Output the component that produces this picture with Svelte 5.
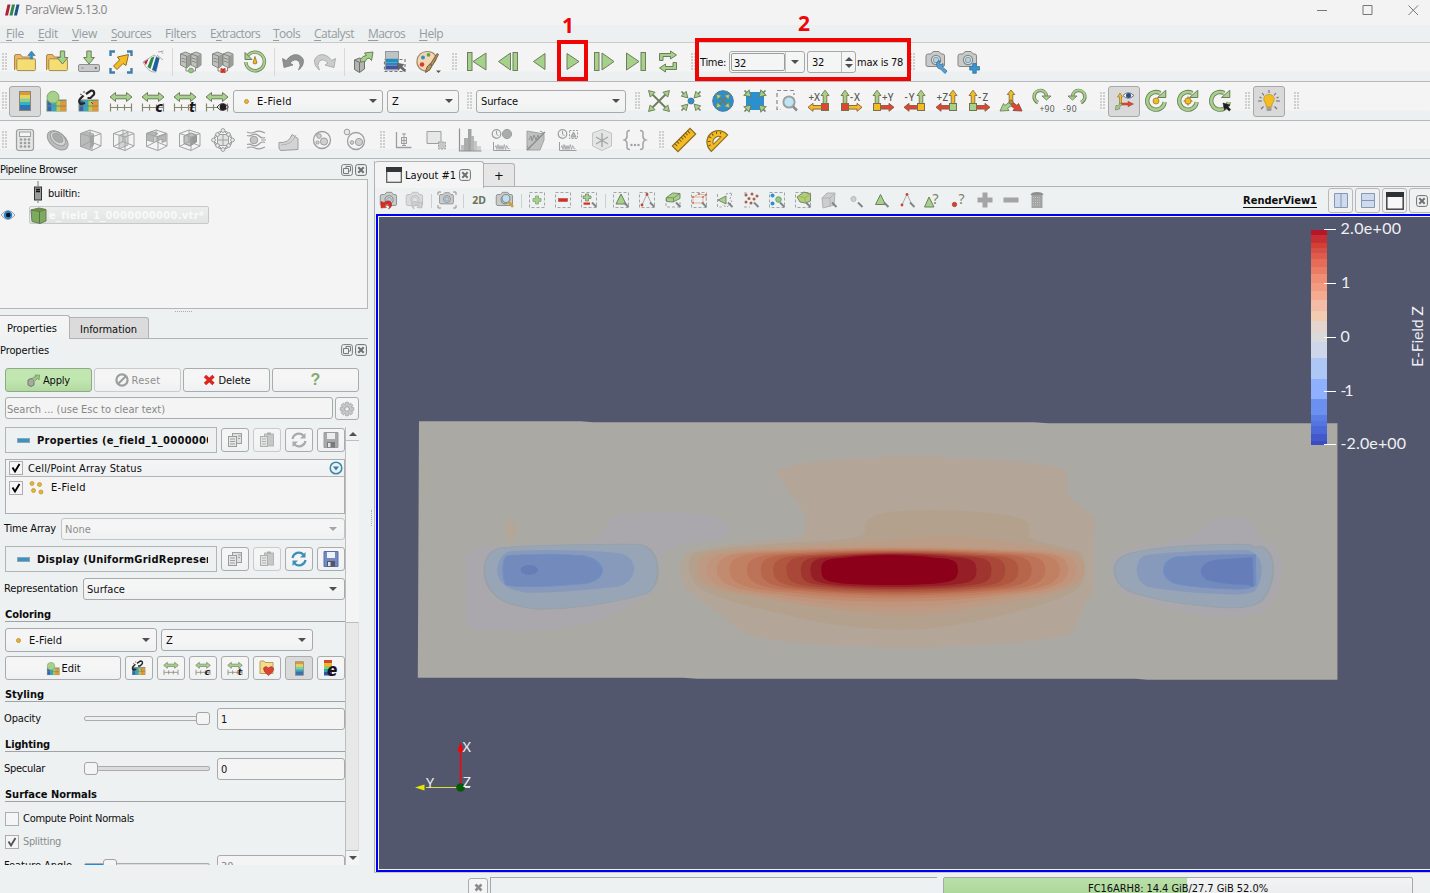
<script>
  // Spreads a label over its nominal width in pixels
  function fit(node, width) {
    if (!width) return;
    const extra = width - node.getBoundingClientRect().width;
    node.style.letterSpacing = `${extra / node.textContent.length}px`;
  }

  const G = '#a5d28b', GS = '#6f7d5e', O = '#f5bb22', R = '#dc4632', B = '#2b90d2', N = '#9c9e9f', L = '#cfd0cf';

  const svg = (body, s = 24) =>
    `<svg width="${s}" height="${s}" viewBox="0 0 ${s} ${s}" fill="none" stroke-width="1" stroke="none">${body}</svg>`;
  const p = (d, fill = 'none', stroke = 'none', w = 1, more = '') =>
    `<path d="${d}" fill="${fill}" stroke="${stroke}" stroke-width="${w}" ${more}/>`;
  const c = (x, y, r, fill = 'none', stroke = 'none', w = 1) =>
    `<circle cx="${x}" cy="${y}" r="${r}" fill="${fill}" stroke="${stroke}" stroke-width="${w}"/>`;
  const r = (x, y, w, h, fill = 'none', stroke = 'none', sw = 1, more = '') =>
    `<rect x="${x}" y="${y}" width="${w}" height="${h}" fill="${fill}" stroke="${stroke}" stroke-width="${sw}" ${more}/>`;
  const t = (x, y, s, size, fill, more = '') =>
    `<text x="${x}" y="${y}" font-family="Noto Sans, sans-serif" font-size="${size}" fill="${fill}" ${more}>${s}</text>`;
  const g = (tr, body) => `<g transform="${tr}">${body}</g>`;

  const folder = p('M1.5 20V6q0-1.5 1.5-1.5h4.5l2 2.5h7.5v3', '#f0b562', '#a58a52') + r(3.8, 8.8, 18.6, 11.8, '#f4dd73', '#a08c50', 1, 'rx="1"');
  const dn = (x, y) => g(`translate(${x} ${y})`, p('M-2.2 0h4.4v6.5h3.2L0 13l-5.4-6.500h3.2z', G, GS));
  const server = (x) => g(`translate(${x} 0)`, p('M0 4l5-2 5 2v11l-4 3-6-3z', '#bfc1bd', '#7d7f7a', 0.900) + p('M6 6l4-2v11l-4 3z', '#9c9e9a') + p('M0 4l6 2v12M1 8l4 1.400M1 11l4 1.400', 'none', '#7f817a', 0.900));
  const servers = server(1.5) + server(12) + p('M7 17v4h9.500v-4', 'none', '#888', 1);
  const range = p('M1 8l5.500-4.500v2.700h11V3.500L23 8l-5.500 4.500V9.800h-11v2.700z', G, GS) + p('M1.500 18.500h21M1.500 14.500v8M8.500 15.500v6M15.500 15.500v6M22.500 14.500v8', 'none', '#85876f', 1.200);
  const ital = (s, x, y, size = 14) => `<text x="${x}" y="${y}" font-family="DejaVu Sans, sans-serif" font-weight="bold" font-style="italic" font-size="${size}" fill="#1b1320">${s}</text>`;
  const lut = r(2, 11, 19, 11, '#3aa6b8', '#7d8a6a') + r(2.500, 12, 4, 10, '#3a62b0') + r(6.500, 12, 5, 10, '#35a8c4') + r(11.500, 12, 4, 10, '#c9c545') + r(15.500, 12, 5.500, 10, '#ea9630') + p('M2 17h19', 'none', '#6f8a78', 1);
  const lutBall = lut + c(8, 8.200, 6, G, '#85a873');
  const lutLink = lut + p('M8 14l-4 1q-3-2-1-5l3.500-3.500M9 5l5-3.500q4 0 3 4l-3.500 3.500-3 0', 'none', '#2a2426', 2.200) + p('M3 5l2 1M7 2v2M14 13l2 2', 'none', '#555', 1);
  const bar = r(6.500, 2.500, 11, 4, '#d89a3a') + r(6.500, 6, 11, 3.500, '#ead35a') + r(6.500, 9.500, 11, 3.500, '#8fcf8a') + r(6.500, 13, 11, 3.500, '#35b1c5') + r(6.500, 16, 11, 5.500, '#3273b4') + r(6.500, 2.500, 11, 19, 'none', '#8b8574', 1);
  const head = (x, y, a, s = 1) => g(`translate(${x} ${y}) rotate(${a}) scale(${s})`, p('M0-4l3.800 6.500h-7.600z', G, GS, 1));
  // Four corner arrow heads at a distance d from the centre
  const four = (d, inward, s) => [45, 135, 225, 315].map((a) => g(`rotate(${a} 12 12)`, head(12, 12 - d, inward ? 180 : 0, s))).join('');
  const up = (x, f) => p(`M${x} 1.200l4 5.300h-2.200v8h-3.600v-8h-2.200z`, f, '#7b7048', 0.900);
  const side = (f, flip) => g(flip ? 'translate(24 0) scale(-1 1)' : '', p('M1 18.300l5-4v2.200h9v3.600H6v2.200z', f, '#8a5a42', 0.900));
  const axis = (label, flip, u, s, q) => up(flip ? 6 : 18, u) + side(s, flip) + r(flip ? 2.500 : 14.500, 14.500, 7, 7, q, '#76704d') + t(flip ? 11 : 1.500, 11.800, label, 9.800, '#555b57', `textLength="${label[0] === '+' ? 11.500 : 10}" font-weight="500"`);
  const ring = (x) => p('M16.300 4.200A8.800 8.800 0 1 0 20.700 13', 'none', GS, 4.300) + p('M16.300 4.200A8.800 8.800 0 1 0 20.700 13', 'none', G, 2.600) + p('M13.500 8.500h8.300V1.200z', G, GS) + x;
  const curl = p('M7 13.500A6.200 6.200 0 1 1 15.500 7', 'none', GS, 3.600) + p('M7.200 13.200A6.200 6.200 0 1 1 15.500 7', 'none', G, 2) + p('M11 7h9l-4.500 4z', G, GS, 0.900);
  const pointer = p('M15 14l7 2-2.300 1.400 3 3.200-1.600 1.500-3-3.200-1.600 2.200z', '#241a22', '#111', 0.500);
  const cubeW = p('M1.500 5.500L11 2l11 3.500L13 9zM1.500 5.500v13L13 22.500V9M22 5.500V18l-9 4.500M11 2v11.500l11 4.500M11 13.500l-9.500 5', 'none', '#a0a2a3', 1);
  const camera = (f = '#c9cbca', s = '#868886', lens = '#a5d6ee') => p('M2 6q0-2 2-2h3l2-2.500h6L17 4h2q1.500 0 1.500 2v9q0 1.500-1.500 1.500H4q-2 0-2-1.500z', f, s) + c(12, 10, 4.600, '#dfe3e4', s, 1.200) + c(12, 10, 2.700, lens, s, 0.800);
  const graph = c(5.500, 6, 4.300, '#eef0f0', N, 1.200) + p('M5.500 3v3l2 2', 'none', N) + p('M2.500 14v8.500h17', 'none', N) + p('M4 19.500l1-2 1 4 1-5 1.200 5 .8-4 1 4 1-4 1 4 1.300-5 1.200 5 1.200-4 1.200 3h1.500', 'none', N, 0.800);
  const swoosh = 'M1.500 8.500l1.500 9 9-2.500-3-2q5-5.500 9-1.500 2.500 3.500-.5 8.500 6-4.500 4.800-10.500Q19.500 3.800 13 4.800 8.500 5.700 5.300 10.500z';

  const ICONS = {
    open: folder + p('M17.300 9V5.500h-2.500L18.500 1l3.700 4.500h-2.500V9z', B, '#5f7d93', 0.800),
    load: folder + dn(17.500, 1),
    save: r(1.500, 14.500, 21, 7, '#c9cacb', '#8d8f90', 1, 'rx="1.500"') + c(18.800, 18, 1.100, '#666') + p('M4 18h3', 'none', '#999') + dn(12, 1),
    catalystout: p('M1.500 6V1.500H6M18 1.500h4.500V6M22.500 18v4.500H18M6 22.500H1.500V18', 'none', '#3f7fae', 2.400) + p('M4.500 16l6-6-2-3 11-2.500L17 15.500l-3-2-6 6z', O, '#8b6f2a'),
    explore: p('M17 2l5.500-1M20 1l2 3M16 5l6 5M2 12l11-7 5 3L15 22q-8 1-13-10z', '#f7f7f7', '#9a9a9a', 0.800) + p('M3 12l4.500-3L5 15z', '#b5243c') + p('M6.500 17L10 8l3.500-1.800L9.500 19z', '#2b8a45') + p('M11 20l4-13 3.500 1L15 21.500z', '#1f5fa0'),
    connect: servers + c(12, 20.500, 2.400, '#8fcb85', '#7c9a72'),
    disconnect: servers + r(9.500, 18.500, 5, 4.500, '#cf5a49') + p('M10 18.500l4 4M14 18.500l-4 4', 'none', '#cf2f20', 1.300),
    history: p('M4.200 6.500A9.300 9.300 0 1 1 2.800 12', 'none', GS, 3.400) + p('M4.200 6.500A9.300 9.300 0 1 1 2.800 12', 'none', G, 2) + p('M2 2.500v7h7z', G, GS) + p('M12 6.500l2 6.500q-2 2-4 0z', O, '#8b6f2a', 0.800),
    undo: p(swoosh, '#8f9191', '#7d7f7f', 0.800),
    redo: g('translate(24 0) scale(-1 1)', p(swoosh, '#cbcccc', '#adafaf', 1)),
    extract: p('M3.500 10l5-2 5 2v9l-5 3.500-5-3z', '#b3b5b1', '#6d6f6a') + p('M3.500 10l5 2.500V22M8.500 12.500l5-2.500', 'none', '#6d6f6a') + p('M9.500 9.500q2-4 6-4L13.500 3l8.500-1-1.500 8.500-2.300-2.500q-3 0-4 3.500l-4.500.5z', G, GS),
    screenbar: r(1.500, 9.500, 20.500, 12, 'none', '#777', 1.200, 'stroke-dasharray="3 2"') + r(2.500, 1.500, 13, 7.500, '#c0c3c4', '#9a9c9d') + r(3, 9, 12, 3.500, '#1f8fbf') + r(3, 12.500, 12, 3, '#2a8ac0') + r(3, 15.500, 12, 4, '#4a4fa0') + r(2.500, 1.500, 13, 18.500, 'none', '#8b9a9c') + p('M14 13l7 1.500-2 1.800 3.500 3.700-1.600 1.500-3.500-3.600L15.500 20z', '#63676a', '#555', 0.500),
    palette: p('M11 1.500c7 0 11 5 8 10-1.500 2-4 1-5 2.500-1 3 2 6-3 7C4 21 .5 16 1 10.500 1.500 5 6 1.500 11 1.500z', '#f5d6b3', '#9b8465', 1.100) + c(12.500, 4.800, 1.900, '#58a552') + c(7, 7.500, 2, B) + c(6, 14.500, 2.300, '#d63f2d') + p('M9.500 22.500q1-7 4.500-8l2 1.500q-1 4-6.500 6.500zM14.500 14l6.500-10.500 1.500 1L16.500 15.500z', '#b8965a', '#665537', 0.900) + p('M20 20.500h5l-2.500 2.500z', '#555'),
    first: r(2.500, 2.500, 4.500, 18, G, GS) + p('M21 3v17L8 11.500z', G, GS),
    prev: r(17, 2.500, 4.500, 18, G, GS) + p('M14.500 3v17L2.500 11.500z', G, GS),
    back: p('M17 3.500v16L5.500 11.500z', G, GS),
    play: p('M7 3.500v16L19 11.500z', G, GS),
    next: r(1.500, 2.500, 4.500, 18, G, GS) + p('M9 3v17l12-8.500z', G, GS),
    last: r(17, 2.500, 4.500, 18, G, GS) + p('M2.500 3v17l12.500-8.500z', G, GS),
    loop: p('M3.500 10.500v-7h11V1l6 4-6 4V6.500H7v4zM20.500 12.500v7h-11V22l-6-4 6-4v2.500H17v-4z', G, GS),
    camwrench: camera() + p('M12.500 13q1-3 4-2l-1.500 2.500 2 1.500 2-1.500q.5 2-.5 3.500l4.500 4-2 2.500-4.500-4.500q-4 0-4-6z', '#5aa0cf', '#38719b', 0.800),
    camplus: camera() + p('M16.700 13.500h3.600v3h3.200v3.600h-3.200v3.200h-3.600v-3.200h-3v-3.600h3z', '#3a93cd', '#2d6d9a', 0.700),
    bar, lutBall, lutLink, range,
    rangec: range + ital('c', 14.500, 22.500), ranget: range + ital('t', 16, 22.500), rangeeye: range + p('M12 18q5.500-7 11.500 0-6 7-11.500 0z', '#eee', '#333', 1) + c(18, 18, 3.300, '#241c24'),
    reset: p('M4 4l16 16M20 4L4 20', 'none', GS, 1.800) + four(11.200, false, 0.900),
    zoomdata: p('M2.500 2.500l5 5M21.500 2.500l-5 5M2.500 21.500l5-5M21.500 21.500l-5-5', 'none', GS, 1.600) + four(8, true, 0.900) + c(12, 12, 3, B, '#4a7896'),
    resetclose: c(12, 12, 10.300, B, '#4a7896') + p('M6.500 6.500l11 11M17.500 6.500l-11 11', 'none', GS, 1.500) + four(6.800, false, 0.800),
    zoomclose: r(3, 3, 18, 18, B, 'none', 0, 'rx="3"') + p('M1.500 1.500l4 4M22.500 1.500l-4 4M1.500 22.500l4-4M22.500 22.500l-4-4', 'none', GS, 1.600) + four(9.500, true, 0.950),
    zoombox: p('M2 8V1.500h17V6M2 11v9.500h4', 'none', '#888', 1.200, 'stroke-dasharray="4 2.500"') + c(14, 13, 5.600, '#bfe4f4', '#9b9fa1', 2) + p('M18 17.500l4 4', 'none', '#8b8f91', 2.600),
    px: axis('+X', false, G, O, R), mx: axis('-X', true, G, O, R), py: axis('+Y', true, G, R, O), my: axis('-Y', false, G, R, O), pz: axis('+Z', false, O, R, G), mz: axis('-Z', true, O, R, G),
    iso: p('M12 1l3.800 4.500h-2v7h-3.600V5.500h-2z', O, '#7b7048', 0.900) + p('M13.500 13l4.500 3.500 1.500-2 3.500 7.500-9-.5 1.500-2-4-3z', R, '#8a4a3a', 0.900) + p('M10.500 13L6 16.500l-1.500-2L1 22l9-.5-1.500-2 4-3z', G, GS, 0.900) + c(12, 13, 2, '#c98d2d', '#76704d'),
    rotp: curl + t(8.500, 22.800, '+90', 8.500, '#555', 'textLength="15"'),
    rotm: g('translate(25 0) scale(-1 1)', curl) + t(0, 22.800, '-90', 8.500, '#555', 'textLength="13.500"'),
    axes: p('M7.500 17V8H5.500L8 4l2.500 4H9.500v6', O, '#8b7b3a', 0.700) + p('M9 14h7v-1.700l5.500 2.700-5.500 2.700V16H9z', R, '#a04030', 0.500) + p('M8.500 14l-2.500 3-2-.5-.5 4.500 4.500-1.500-.5-1.300 2.500-3z', G, GS, 0.700) + p('M11 6.500q5-5.500 11 0-6 5.500-11 0z', '#eef3f7', '#667', 0.900) + c(16.500, 6.500, 2.500, '#2f4c80'),
    center: ring(c(12, 12, 3, O, '#9a7d2e', 0.800)),
    resetcenter: ring(c(12, 12, 3.200, O, '#9a7d2e', 0.800) + p('M12 7.500v2M12 14.500v2M7.500 12h2M14.500 12h2', 'none', '#9a7d2e', 1.200)),
    pickcenter: ring(pointer),
    light: p('M12 1v3M5 4l2 2.300M19 4l-2 2.300M1 12h4M19 12h4M4 20l2.500-2.500M20 20l-2.500-2.500M2.500 8l2 1M21.500 8l-2 1', 'none', '#6d6f70', 1.100) + p('M12 5.500c4 0 6 3 5 6.200-.7 2-2.200 2.500-2.200 6.300H9.200c0-3.800-1.500-4.300-2.200-6.300-1-3.200 1-6.200 5-6.200z', O, '#b8902a', 0.700) + r(9.500, 18, 5, 4, '#9b9d9e', 'none', 0, 'rx="1"'),
    calc: r(3.500, 1.500, 17, 21, '#e4e5e5', N, 1.200, 'rx="2.500"') + r(6.500, 4, 11, 4.500, '#f4f4f4', N) + [11.500, 15, 18.500].map((y) => [8, 12, 16].map((x) => c(x, y, 1.300, N)).join('')).join(''),
    contour: g('rotate(40 12 12)', `<ellipse cx="12" cy="12.500" rx="12" ry="7.500" fill="#bcbdbd" stroke="${N}"/><ellipse cx="11" cy="11" rx="9" ry="5.500" fill="#d4d5d5" stroke="${N}"/><ellipse cx="10.500" cy="10.500" rx="6" ry="3.500" fill="#a9abab" stroke="${N}"/>`),
    clip: p('M1.500 5.500L8 3l7 2.500-4 2.500v13.500l-9.500-3z', '#b9bbbb') + p('M11 8l4-2.500V17l-4 4.500z', '#a3a5a5') + cubeW,
    slice: p('M7 7.500l9-3.500v13l-9 4z', '#d2d3d3', '#a8aaaa') + cubeW,
    threshold: p('M1.500 5.500L7 3.500l6 2-4 2.500v6l-7.500-2zM12 8.500l9-3V13l-4 1.500V11l-5 2z', '#b6b8b8', '#979999', 0.800) + cubeW,
    subset: p('M6 8l7-3 5.500 2v7L12 18l-6-2.500z', '#c0c2c2', '#8f9191') + p('M12 10l6.500-3v7L12 18z', '#989a9a') + cubeW,
    glyph: c(12, 12, 9, 'none', N, 1.200) + r(6.500, 6.500, 11, 11, '#e2e3e3', N) + p('M6.500 12h11M12 6.500v11M2 12l10-10 10 10-10 10z', 'none', N) + [[12, 2.500], [12, 21.500], [2.500, 12], [21.500, 12], [6.500, 6.500], [17.500, 6.500], [6.500, 17.500], [17.500, 17.500]].map(([x, y]) => c(x, y, 1.900, '#e8e9e9', N)).join(''),
    stream: p('M3 4q4 2 8 0t10 1M3 20q4-2 8 0t10-1M3 7.500q3 1 5-.5 4-2 7 1t6 1.500M3 16.500q3-1 5 .5 4 2 7-1t6-1.500M17 12h5', 'none', N, 1.200) + c(10, 12, 3.800, '#c4c5c5', N),
    warp: p('M2 14.500q10 1 13-8l6 4v11l-17.500 1L2 20z', '#d3d4d4', N) + p('M4 17q11 0 15-10', 'none', '#b3b5b5'),
    group: c(12, 12, 8.500, 'none', N, 1.300) + c(14, 13.500, 3.600, L, N) + c(9, 8, 2.300, L, N) + c(7.500, 14.500, 1.600, L, N),
    extractg: c(13, 13, 8.500, 'none', N, 1.300) + c(16, 14, 3.600, L, N) + c(9, 14.500, 1.800, L, N) + c(4, 4, 2.800, '#e7e8e8', N),
    plotline: p('M4.500 4v15.500h15', 'none', N, 1.300) + r(9.500, 9.500, 5, 6, '#eee', N) + p('M12 5.500v12M10 6h4M10 17.500h4M9.500 12.500h5', 'none', N),
    plotsel: p('M2 3.500h14v12H2z', '#e6e7e7', N, 1) + r(13.500, 14, 7, 7, '#c6c8c8', N, 1, 'stroke-dasharray="2 1.300"'),
    hist: r(3, 17, 4, 6, '#bdbfbf') + r(6, 10, 4, 13, '#abadad') + r(10, 1, 3.500, 22, '#a2a4a4') + r(13, 8, 3, 15, '#b5b7b7') + r(16, 13, 3, 10, '#c5c7c7') + r(19, 18, 4, 5, '#d2d4d4') + p('M1.500 .5v22.500h22', 'none', '#8d9294', 1.200),
    pot: graph + c(16, 6, 4.600, '#a9abac', N),
    plotdata: p('M3 3l17 3v6l-4 10H3z', '#bfc1c1', '#a1a3a3') + p('M3 22L21 4', 'none', '#888a8a', 1.300) + p('M5 12l2-4 1 5 2-6 2 5 2-5 1 3', 'none', '#8f9191') + p('M16 3l4 2M3 18l3 4', 'none', '#999'),
    pott: graph + r(12.500, 2.500, 8, 8, 'none', N, 1, 'stroke-dasharray="2 1.300"') + p('M16.500 4l2.500 5h-5z', '#bcbebe', N),
    prog: p('M12 1.500l9.500 3.500v13L12 22.500 2.500 18V5z', '#e3e4e4', '#c3c5c5') + p('M12 5v14M6 9l12 7M18 9L6 16', 'none', '#a4a6a6', 1.400),
    braces: p('M7 2.500Q3.500 2.500 4 6q.5 5-2.500 6Q4.500 13 4 18q-.5 3.500 3 3.500M17 2.500q3.500 0 3 3.500-.5 5 2.500 6-3 1-2.500 6 .5 3.500-3 3.500', 'none', '#a6a8a8', 1.600) + c(8.500, 17, 1.200, N) + c(12, 17, 1.200, N) + c(15.500, 17, 1.200, N),
    ruler: g('rotate(-45 12 12)', r(-.5, 8, 25, 8, O, '#8a6d24', 1.200) + p('M3 8v3.500M6 8v3M9 8v3.500M12 8v3M15 8v3.500M18 8v3M21 8v3.500', 'none', '#6e561b', 1)),
    protractor: g('rotate(-45 12 12)', p('M0 14.500a11.500 11.500 0 0 1 23 0v1.500H0z', O, '#8a6d24', 1.200) + p('M6.500 12.500a5.500 5 0 0 1 10.500 0z', '#f3f3f3', '#8a6d24') + p('M2 10l2 1M4.500 6.500l2 2M8.500 4l1 2.300M13 4l-.5 2.300M17.500 5.500l-1.500 2M20.500 9l-2 1.300', 'none', '#6e561b')),
    refresh: p('M5.500 11a6.500 6.500 0 0 1 11-3.500M18.500 13a6.500 6.500 0 0 1-11 3.500', 'none', '#3d8fb5', 2.200) + p('M18.500 5v5.500H13zM5.500 19v-5.500H11z', '#3d8fb5'),
    refreshoff: p('M5.500 11a6.500 6.500 0 0 1 11-3.500M18.500 13a6.500 6.500 0 0 1-11 3.500', 'none', '#a9abac', 2.200) + p('M18.500 5v5.500H13zM5.500 19v-5.500H11z', '#a9abac'),
    copy: r(9.500, 5.500, 9, 10, '#dfe0e0', '#9c9e9f') + r(5.500, 8.500, 8, 10, '#e5e6e6', '#989a9b') + p('M7 11h5M7 13.500h5M7 16h5M15 8h3M15 10.500h2', 'none', N),
    paste: r(9.500, 6, 9, 12, '#c6c8c8', '#b3b5b5') + r(12, 4.500, 4, 2, '#a9abab') + r(5.500, 8.500, 7, 10, '#e2e3e3', '#adafaf') + p('M7 11h4M7 13.500h4M7 16h4', 'none', '#b2b4b4'),
    disk: p('M5 4.500h14v15H5z', '#7489c2', '#5570ad') + r(8, 5, 8, 6, '#eef1f5') + r(8, 14, 8, 5.500, '#4e5666') + r(9, 15, 2.500, 4, '#dfe3e8'),
    diskoff: p('M5 4.500h14v15H5z', '#a6a8a9', '#9b9d9e') + r(8, 5, 8, 6, '#eceded') + r(8, 14, 8, 5.500, '#77797a') + r(9, 15, 2.500, 4, '#e3e4e4'),
    gear: g('translate(12 12)', [0, 45, 90, 135].map((a) => g(`rotate(${a})`, r(-1.700, -6.800, 3.400, 13.600, '#c5c7c8', '#9b9d9e', 0.700, 'rx=".8"'))).join('') + c(0, 0, 4.700, '#c5c7c8') + c(0, 0, 2.300, '#edf0f1', '#9b9d9e', 0.900)),
    heart: p('M5 6q0-1 1-1h3l1 1.500h8v11H5z', '#f3dc8a', '#b59f5e') + p('M13.500 19.500Q8 15.500 8.500 12q2-3 5 0 3-3 5 0 1 3-5 7.500z', '#db4336', '#a6332a', 0.600),
    expr: p('M5 4h8v3H5z', '#d6462e') + r(5, 7, 8, 3, '#f0b431') + r(5, 10, 8, 3, '#8fcf5a') + r(5, 13, 8, 3, '#2ba3c5') + r(5, 16, 8, 3.500, '#2d55a8') + ital('e', 8, 20, 17),
    cube: p('M1 3l8-2 7 1.500V14l-6 2.500-8-2z', '#7dab5e', '#6b7a58') + p('M1 3l8.500 1.500V16M9.500 4.500L16 2.500', 'none', '#5c7148') + p('M1 3l8.500 1.500L16 2.500 9 1z', '#6f8c48'),
  };

  const dash = r(2.500, 2.500, 15, 15, 'none', '#a3a5a5', 1, 'stroke-dasharray="3 2"');
  const wand = p('M13 12.500l4.500 4.500', 'none', '#80858a', 2);
  const sm = (f, s, lens) => g('translate(-.5 1) scale(.88)', camera(f, s, lens));
  const tri = p('M10 4l5 10H5z', G, GS, 1);
  const dots3 = p('M10 4L5 15M10 4l5 11', 'none', '#a5a5a5', 0.900) + c(10, 4.500, 1.400, '#bf4a3c') + c(5, 15, 1.400, '#cf4034');
  const q = t(9.500, 13.500, '?', 14, '#77836a');
  const SMALL = {
    undo: sm() + p('M2 11.500v6.500l5.500-.5-2-1.800q3-3 4.500-.3 1 1.800-.5 3.600 4-2 3-6-2-4-7.500-.5z', '#e02a20', '#a52a20', 0.500),
    redo: sm('#d9dadb', '#bbbdbd', '#e3e6e8') + p('M17 12v6l-5-.5 1.800-1.800q-3-2.500-4.800.3-.8 1.800 0 3-3-2-2-5.500 2-3.500 7-.5z', '#cfd0d0', '#adafaf', 0.600),
    shot: g('translate(1 1.500) scale(.75)', camera()) + p('M1 5V2h3M16 2h3v3M19 15v3h-3M4 18H1v-3', 'none', '#8f9192', 1),
    zoom: sm() + c(11, 8.500, 4, '#b9dff0', '#8b8f91', 1.200) + p('M13.500 11.500l4.500 5.500', 'none', '#c9a23a', 2.600),
    addsel: dash + p('M8.500 6h3v2.500H14v3h-2.500V14h-3v-2.500H6v-3h2.500z', G, '#89a577', 0.800),
    subsel: dash + r(5.500, 8.500, 9, 3, '#e02a20', '#a34b42', 0.600),
    togsel: dash + p('M6.500 4h3v2H12v2.500H9.500V11h-3V8.500H4V6h2.500z', G, GS, 0.700) + r(4.500, 12.500, 6.500, 2.200, '#e02a20') + wand,
    selcell: dash + tri + wand, selpt: dash + dots3 + wand,
    frcell: p('M3 8v9h14v-5', 'none', '#a3a5a5', 1, 'stroke-dasharray="3 2"') + p('M3.500 7.500l6-4.500 7.500.5v5l-7 3.500-6.500-.5z', G, GS, 0.900) + p('M3.500 7.500l7 .5v4M10.500 8L17 3.500', 'none', GS, 0.800) + wand,
    frpt: dash + p('M4 7l6-3 7 1v6M4 7h10v6H4zM14 7l3-2', 'none', '#d8b5a0', 1) + [[4, 7], [10, 4], [17, 5], [14, 7], [4, 13], [14, 13]].map(([x, y]) => c(x, y, 1, '#d86a50')).join('') + wand,
    pcell: p('M2.500 4v13h4', 'none', '#a3a5a5', 1, 'stroke-dasharray="3 2"') + p('M3 10l8-4v8z', G, GS, 0.900) + p('M11 4l6-1-2 6 2 3-5 5-5-2', 'none', '#999', 1, 'stroke-dasharray="2 1.500"') + wand,
    ppt: p('M3 3h4M3 17h6', 'none', '#a3a5a5', 1, 'stroke-dasharray="3 2"') + [[5, 5], [11, 4], [8, 8.500], [13, 9], [5, 12], [10, 13], [16, 6]].map(([x, y]) => c(x, y, 1.500, '#a5644e')).join('') + wand,
    block: dash + c(5.500, 5.500, 2, B) + c(5.500, 13.500, 2, B) + c(11.500, 9.500, 2.800, '#8fcb85', '#70a066') + wand,
    frblock: dash + p('M4 7l7-5 6.500 2v7l-5 2-5.500-1z', G, GS, 0.900) + p('M5 6l7 2v4M12 8l5-4', 'none', '#c8b03c', 1.500) + wand,
    inter: p('M3 8l5-5h8l-1 12-11 3z', '#cccdcd', '#b0b2b2') + p('M3 8h8l5-5M11 8v9', 'none', '#b0b2b2') + wand,
    hoverp: c(8.500, 9, 2.600, '#cdcfcf', '#b9bbbb') + wand,
    hcell: p('M9.500 4.500l5 10h-10z', G, GS) + wand, hpt: dots3 + wand,
    qcell: p('M6 7l5 10H1.500z', G, GS) + q, qpt: c(5.500, 14.500, 2.200, '#d8402f', '#9d3a2e', 0.700) + q,
    plus: p('M7.500 2.500h5v5h5v5h-5v5h-5v-5h-5v-5h5z', '#a3a4a4'),
    minus: r(2.500, 7.500, 15, 5, '#a3a4a4'),
    trash: p('M4.500 5h11v13h-11z', '#a2a4a4') + p('M3.500 5Q4 2 10 2t6.500 3z', '#8e9090') + p('M6 7.500h8M6 10h8M6 12.500h8M6 15h8', 'none', '#c3c5c5', 1, 'stroke-dasharray="1 1"'),
  };

  // [kind or icon name, slot width, pressed flag or left padding of a grip]
  const row1a = [['grip', 9], ['open', 32], ['load', 32], ['save', 32], ['catalystout', 32], ['explore', 32], ['sep', 6], ['connect', 32], ['disconnect', 32], ['history', 32], ['sep', 6], ['undo', 32], ['redo', 32], ['sep', 6], ['extract', 31], ['screenbar', 33], ['palette', 34], ['grip', 16, 2], ['first', 31], ['prev', 32], ['back', 31], ['play', 34], ['next', 31], ['last', 32], ['loop', 32], ['grip', 16, 2]];
  const row1b = [['grip', 15], ['camwrench', 32], ['camplus', 32]];
  const row2a = [['grip', 9], ['bar', 32, true], ['lutBall', 32], ['lutLink', 32], ['range', 32], ['rangec', 32], ['ranget', 32], ['rangeeye', 32]];
  const row2b = [['grip', 17, 5], ['reset', 32], ['zoomdata', 32], ['resetclose', 32], ['zoomclose', 32], ['zoombox', 32], ['px', 32], ['mx', 32], ['py', 32], ['my', 32], ['pz', 32], ['mz', 32], ['iso', 32], ['rotp', 32], ['rotm', 32], ['grip', 17, 5], ['axes', 32, true], ['center', 32], ['resetcenter', 32], ['pickcenter', 32], ['grip', 17, 5], ['light', 32, true], ['grip', 22]];
  const row3 = [['grip', 8], ...['calc', 'contour', 'clip', 'slice', 'threshold', 'subset', 'glyph', 'stream', 'warp', 'group', 'extractg'].map((n) => [n, 33]), ['grip', 16, 6], ...['plotline', 'plotsel', 'hist', 'pot', 'plotdata', 'pott', 'prog', 'braces'].map((n) => [n, 33]), ['grip', 16, 5], ['ruler', 33], ['protractor', 33]];
  const viewBar = ['undo', 'redo', '|', 'shot', '|', '2D', 'zoom', '|', 'addsel', 'subsel', 'togsel', '|', 'selcell', 'selpt', 'frcell', 'frpt', 'pcell', 'ppt', 'block', 'frblock', 'inter', 'hoverp', 'hcell', 'hpt', 'qcell', 'qpt', 'plus', 'minus', 'trash'];

  const menus = [['', 'F', 'ile', 18, 14], ['', 'E', 'dit', 20, 14], ['', 'V', 'iew', 25, 14], ['', 'S', 'ources', 40, 14], ['F', 'i', 'lters', 31, 14], ['E', 'x', 'tractors', 50, 13], ['', 'T', 'ools', 27, 14], ['', 'C', 'atalyst', 40, 14], ['', 'M', 'acros', 37, 14], ['', 'H', 'elp', 24, 0]];

  const legend = [[60, '#b81628'], [75, '#c62f32'], [99, '#d43f33'], [114, '#d44f45'], [129, '#e05b4b'], [147, '#e56c57'], [171, '#ea7b64'], [192, '#f08e74'], [219, '#f39b80'], [243, '#f5ab90'], [270, '#f4bba6'], [303, '#f2ccb0'], [333, '#e6d4cf'], [366, '#d9dad9'], [396, '#cdd6ea'], [444, '#adc8f5'], [507, '#8fb0fe'], [567, '#6c90f0'], [615, '#5b7ee6'], [633, '#5475de'], [648, '#4a68d6'], [672, '#4159cb'], [693, '#3a4cc0'], [705, '']];
  const ticks = [[229.500, '2.0e+00', 1340.500, 60.500], [283.500, '1', 1341, 8], [337.500, '0', 1340.500, 9.500], [391.500, '-1', 1340.500, 13], [444.500, '-2.0e+00', 1340.500, 65.500]];

  const bands = [
    [480, 1125, 408, 605, '#bd9a84'], [495, 1112, 412, 590, '#c0957b'], [512, 1098, 415, 575, '#c28b6f'], [533, 1084, 418, 565, '#c28063'],
    [562, 1060, 421, 557, '#bd7357'], [585, 1037, 423, 551, '#b8664b'], [606, 1015, 426, 546, '#b05740'], [628, 993, 428, 541, '#a94838'],
    [652, 970, 430, 536, '#a03530'], [668, 945, 432, 531, '#961f27'], [686, 914, 435, 525, '#8c001a'],
  ];
  const band = ([l, rt, tp, b]) => {
    const w = rt - l, m = (l + rt) / 2, h = b - 480;
    const f = 0.08 + (0.26 * (b - 524)) / 80;
    const ty = tp + 8, y1 = 480 - 0.7 * (480 - tp), by = b - h * f, y2 = 480 + Math.min(42, 0.75 * h), by2 = by - 4 - h * 0.06;
    return `M${l} 480C${l} ${y1} ${l + w * 0.04} ${ty + 4} ${l + w * 0.17} ${ty}Q${m - w * 0.18} ${tp} ${m} ${tp}Q${m + w * 0.18} ${tp} ${rt - w * 0.17} ${ty}C${rt - w * 0.04} ${ty + 4} ${rt} ${y1} ${rt} 480C${rt} ${y2} ${rt - w * 0.05} ${by2} ${rt - w * 0.17} ${by}Q${m + w * 0.18} ${b} ${m} ${b}Q${m - w * 0.18} ${b} ${l + w * 0.17} ${by}C${l + w * 0.05} ${by2} ${l} ${y2} ${l} 480Z`;
  };
</script>

{#snippet txt(s, w)}<span class="txt" use:fit={w}>{s}</span>{/snippet}
{#snippet ico(name)}<span class="ic">{@html svg(ICONS[name])}</span>{/snippet}
{#snippet cells(list)}
  {#each list as [name, width, extra]}
    <span class="cell" class:on={extra === true} style:width="{width}px" style:padding-left="{extra > 1 ? extra : 0}px">
      {#if name === 'grip'}<i class="grip"></i>{:else if name === 'sep'}<i class="sep"></i>{:else}{@render ico(name)}{/if}
    </span>
  {/each}
{/snippet}
{#snippet dockButtons()}
  <span class="dock">
    <svg width="12" height="12" viewBox="0 0 12 12" fill="none" stroke="#777b7c"><rect x=".6" y=".6" width="10.800" height="10.800" rx="2" /><path d="M5 4.500V2.500h4.500V7H7.500M2.500 4.500h5v5h-5z" /></svg>
    {@render closeBox()}
  </span>
{/snippet}
{#snippet closeBox()}
  <svg width="12" height="12" viewBox="0 0 12 12" fill="none" stroke="#6c7071"><rect x=".6" y=".6" width="10.800" height="10.800" rx="2" /><path d="M3.300 3.300l5.400 5.400M8.700 3.300L3.300 8.700" stroke-width="2" /></svg>
{/snippet}
{#snippet combo(label, w, cls, dot)}
  <div class="combo {cls}">
    {#if dot}<i class="dot"></i>{/if}{@render txt(label, w)}<i class="caret"></i>
  </div>
{/snippet}
{#snippet check(on)}
  <span class="check">{#if on}<svg width="12" height="12" viewBox="0 0 12 12"><path d="M2.500 5.500L5 9.500 9.500 2" fill="none" stroke="currentColor" stroke-width="1.900" /></svg>{/if}</span>
{/snippet}
{#snippet header(title, w, refresh, disk)}
  <div class="hdr">
    <div class="hbox"><i class="dashmark"></i><b>{@render txt(title, w)}</b></div>
    <span class="btn sq">{@render ico('copy')}</span><span class="btn sq off">{@render ico('paste')}</span>
    <span class="btn sq">{@render ico(refresh)}</span><span class="btn sq">{@render ico(disk)}</span>
  </div>
{/snippet}

<div class="app">
  <div class="title">
    <svg width="15" height="12" viewBox="0 0 15 12"><path d="M2.500.5h3L3 11.500H0z" fill="#b3203a" /><path d="M7 .5h3L7.500 11.500h-3z" fill="#2a8a4a" /><path d="M11.500.5h3L12 11.500H9z" fill="#1d5288" /></svg>
    {@render txt('ParaView 5.13.0', 82)}
    <svg class="wc" width="102" height="12" viewBox="0 0 102 12" fill="none" stroke="#777"><path d="M0 6.500h10M46 1.500h9v9h-9zM91.500 1.500l9.500 9.500M101 1.500L91.500 11" /></svg>
  </div>
  <div class="menu">
    {#each menus as [a, u, b, w, gap]}<span class="txt" use:fit={w} style:margin-right="{gap}px">{a}<u>{u}</u>{b}</span>{/each}
  </div>

  <div class="bar">
    {@render cells(row1a)}
    <span class="tlabel">{@render txt('Time:', 26)}</span>
    <div class="tcombo"><div class="tin">{@render txt('32', 12)}</div><span class="tdrop"><i class="caret"></i></span></div>
    <div class="spin"><span class="sv">{@render txt('32', 12)}</span><span class="sb"><i class="caret up"></i><i class="caret"></i></span></div>
    <span class="tmax">{@render txt('max is 78', 46)}</span>
    {@render cells(row1b)}
  </div>
  <div class="bar">
    {@render cells(row2a)}
    {@render combo('E-Field', 35, 'c150', true)}
    {@render combo('Z', 6, 'c72')}
    <span class="cell g2"><i class="grip"></i></span>
    {@render combo('Surface', 37, 'c150 nomr')}
    {@render cells(row2b)}
  </div>
  <div class="bar last">{@render cells(row3)}</div>

  <div class="main">
    <aside>
      <div class="dtitle">{@render txt('Pipeline Browser', 77)}{@render dockButtons()}</div>
      <div class="tree">
        <div class="trow first">
          <svg width="10" height="22" viewBox="0 0 10 22"><path d="M5 0v5M5 20v2" stroke="#7a7d68" /><rect x="1.500" y="6" width="7" height="13" fill="#9a9c9b" stroke="#333" /><path d="M3 8.500h4M3 10.500h4" stroke="#111" stroke-width="1.400" /></svg>
          {@render txt('builtin:', 32)}
        </div>
        <div class="trow second">
          <svg width="16" height="12" viewBox="0 0 16 12"><path d="M1 6q7-9 14 0-7 9-14 0z" fill="#f3f5f6" stroke="#9ba3a8" /><circle cx="8" cy="6" r="4.300" fill="#2c86c6" /><circle cx="8.300" cy="6" r="2.300" fill="#0a1016" /></svg>
          <div class="sel"><span class="ic cube">{@html svg(ICONS.cube, 17)}</span><b>{@render txt('e_field_1_0000000000.vtr*', 155)}</b></div>
        </div>
      </div>
      <div class="hdots"></div>
      <div class="tabs"><div class="tab act">{@render txt('Properties', 50)}</div><div class="tab">{@render txt('Information', 57)}</div><div class="fill"></div></div>
      <div class="dtitle two">{@render txt('Properties', 49)}{@render dockButtons()}</div>
      <div class="btns">
        <span class="btn apply"><svg width="13" height="13" viewBox="0 0 13 13"><path d="M1 6l3-1.500L7 6v5l-3 1.500L1 11z" fill="#a6aaa3" stroke="#74786f" /><path d="M5 5q1-2.500 4-2.500L8 1h4.500l-.5 5-1.500-1.500L8 7" fill="#9bc587" stroke="#7c9270" stroke-width=".8" /></svg>{@render txt('Apply', 27)}</span>
        <span class="btn off"><svg width="14" height="14" viewBox="0 0 14 14" fill="none" stroke="#9b9d9e" stroke-width="2.200"><circle cx="7" cy="7" r="5.600" /><path d="M3 11L11 3" /></svg>{@render txt('Reset', 29)}</span>
        <span class="btn"><svg width="13" height="12" viewBox="0 0 13 12"><path d="M2 2l8.500 8M10.500 2L2 10" stroke="#d9261e" stroke-width="3.400" /></svg>{@render txt('Delete', 32)}</span>
        <span class="btn help">?</span>
      </div>
      <div class="search"><div class="inp">{@render txt('Search ... (use Esc to clear text)', 158)}</div><span class="btn gear">{@render ico('gear')}</span></div>

      <div class="scroll">
        <div class="content">
          {@render header('Properties (e_field_1_00000000)', 188, 'refreshoff', 'diskoff')}
          <div class="arr">
            <div class="arow head">{@render check(true)}{@render txt('Cell/Point Array Status', 114)}
              <svg width="14" height="14" viewBox="0 0 14 14"><circle cx="7" cy="7" r="5.800" fill="#e9f1f4" stroke="#3f87a6" stroke-width="1.500" /><path d="M4 5.500h6L7 9.500z" fill="#3a7f9f" /></svg>
            </div>
            <div class="arow">{@render check(true)}<svg class="pts" width="16" height="16" viewBox="0 0 16 16" fill="#ecb428" stroke="#b58f35" stroke-width=".7"><circle cx="3" cy="3.500" r="2" /><circle cx="10.500" cy="4.500" r="2" /><circle cx="4.500" cy="10.500" r="2" /><circle cx="12" cy="12" r="2" /></svg>{@render txt('E-Field', 35)}</div>
          </div>
          <div class="frow mb6"><span class="lab l1">{@render txt('Time Array', 52)}</span>{@render combo('None', 26, 'grow dis')}</div>
          {@render header('Display (UniformGridRepresentation)', 216, 'refresh', 'disk')}
          <div class="frow"><span class="lab l2">{@render txt('Representation', 74)}</span>{@render combo('Surface', 38, 'grow')}</div>
          <div class="sect">{@render txt('Coloring', 46)}</div>
          <div class="frow cc">{@render combo('E-Field', 33, 'cc1', true)}{@render combo('Z', 6, 'cc2')}</div>
          <div class="frow eb">
            <span class="btn edit"><span class="ic mini">{@html svg(ICONS.lutBall).replace('width="24" height="24"', 'width="15" height="15"')}</span>{@render txt('Edit', 19)}</span>
            {#each ['lutLink', 'range', 'rangec', 'ranget'] as n}<span class="btn sq"><span class="ic">{@html svg(ICONS[n]).replace('width="24" height="24"', 'width="16" height="16"')}</span></span>{/each}
            <span class="btn sq">{@render ico('heart')}</span>
            <span class="btn sq down"><span class="ic">{@html svg(bar).replace('width="24" height="24"', 'width="17" height="17"')}</span></span>
            <span class="btn sq">{@render ico('expr')}</span>
          </div>
          <div class="sect">{@render txt('Styling', 39)}</div>
          <div class="frow"><span class="lab l3">{@render txt('Opacity', 37)}</span><span class="slider"><i class="right"></i></span><div class="inp v">1</div></div>
          <div class="sect">{@render txt('Lighting', 45)}</div>
          <div class="frow"><span class="lab l3">{@render txt('Specular', 41)}</span><span class="slider gray"><i></i></span><div class="inp v">0</div></div>
          <div class="sect">{@render txt('Surface Normals', 92)}</div>
          <div class="crow">{@render check(false)}{@render txt('Compute Point Normals', 111)}</div>
          <div class="crow dim">{@render check(true)}{@render txt('Splitting', 38)}</div>
          <div class="frow"><span class="lab l3">{@render txt('Feature Angle', 68)}</span><span class="slider part"><i></i></span><div class="inp v dimt">30</div></div>
        </div>
        <div class="sbar"><span class="sbtn"><i class="caret up"></i></span><span class="track"></span><span class="thumb"></span><span class="sbtn dn"><i class="caret"></i></span></div>
      </div>
    </aside>
    <div class="split"><i></i></div>
    <section>
      <div class="ltabs">
        <div class="ltab a"><svg width="16" height="16" viewBox="0 0 16 16"><rect x=".7" y="1" width="14.600" height="14.300" fill="#f3f3f3" stroke="#555" stroke-width="1.200" /><path d="M0 0h16v5H0z" fill="#333638" /></svg>{@render txt('Layout #1', 51)}{@render closeBox()}</div>
        <div class="ltab b">+</div><div class="lfill"></div>
      </div>
      <div class="vbar">
        {#each viewBar as n}
          {#if n === '|'}<span class="vsep"></span>{:else if n === '2D'}<span class="vcell d2">2D</span>{:else}<span class="vcell ic">{@html svg(SMALL[n], 20)}</span>{/if}
        {/each}
        <b class="rv">{@render txt('RenderView1', 74)}</b>
        <span class="vb"><svg width="14" height="15" viewBox="0 0 14 15"><path d="M.5.5h13v14H.5zM7 0v15" fill="#cfdaee" stroke="#8497b3" /></svg></span>
        <span class="vb"><svg width="14" height="15" viewBox="0 0 14 15"><path d="M.5.5h13v14H.5zM0 7.500h14" fill="#cfdaee" stroke="#8497b3" /></svg></span>
        <span class="vb"><svg width="18" height="18" viewBox="0 0 18 18"><rect x=".8" y=".8" width="16.400" height="16.400" fill="#f8f8f8" stroke="#47434e" stroke-width="1.500" /><path d="M0 0h18v5H0z" fill="#2f3234" /></svg></span>
        <span class="vb">{@render closeBox()}</span>
      </div>
      <div class="view">
        <svg width="1051" height="652" viewBox="379 217 1051 652">
          <rect x="379" y="217" width="1051" height="652" fill="#52576e" />
          <g transform="translate(410 410) scale(.5995 .33333)">
            <path fill="#aaa9a4" d="M15 34H285L305 37H1040L1065 40H1547V809H1230L1210 806H480L455 803H13Z" />
            <path fill="#aba8ad" d="M93 440Q95 415 130 408L290 398Q318 385 325 350Q335 312 370 308Q430 303 480 312Q530 325 535 355Q535 380 515 390Q440 405 425 420Q415 440 418 470L410 540Q390 575 330 620Q270 660 200 662L110 660Q95 660 93 640Z" />
            <path fill="#aba8ad" d="M1170 440Q1180 420 1240 405Q1310 385 1322 350Q1325 325 1375 323Q1405 325 1410 350Q1415 385 1440 405Q1458 430 1455 500Q1450 560 1425 605Q1380 630 1320 618Q1220 580 1185 545Q1165 510 1170 440Z" />
            <path fill="#b3a698" d="M612 185Q615 172 650 162Q720 143 800 140Q900 138 980 150Q1060 160 1090 178Q1097 190 1096 215Q1092 240 1100 260Q1120 295 1143 320L1141 540Q1130 570 1118 610Q1112 650 1100 672Q1040 700 900 710Q820 715 720 708Q600 695 565 675Q545 660 530 630L500 590Q460 540 455 520Q445 470 460 430Q480 415 540 403L640 385Q662 375 660 355V320Q655 295 640 265L620 215Q610 200 612 185ZM163 322Q182 345 181 358Q178 378 163 402Q155 360 163 322Z" />
            <path fill="#b4a18d" d="M760 340Q765 315 800 305Q870 295 950 305Q1025 318 1032 340V380Q1045 392 1075 405L1118 425Q1135 480 1118 530Q1100 560 1040 590Q920 655 820 660Q720 655 640 620Q510 570 480 530Q455 480 470 430Q530 405 700 392Q755 385 758 370Z" />
            <path fill="#bb9d87" d="M800 392Q890 370 970 390Q1080 410 1112 430Q1126 480 1112 525Q1050 570 960 590Q820 640 700 595Q560 560 490 525Q470 480 485 435Q560 410 720 400Z" />
            {#each bands as b}<path d={band(b)} fill={b[4]} />{/each}
            <path fill="#98a5b6" stroke="#97a2a5" stroke-width="3" d="M124 480Q125 425 150 414Q230 402 380 403Q412 410 413 480Q414 530 395 550Q310 595 215 598Q165 590 145 560Q124 530 124 480Z" />
            <path fill="#879abc" d="M145 480Q148 430 170 423Q270 415 350 430Q374 440 374 480Q370 520 345 530Q260 548 195 548Q165 540 158 525Q146 510 145 480Z" />
            <path fill="#738abd" stroke="#6f90c6" stroke-width="2" d="M155 475Q156 437 165 436L235 432L290 437Q320 450 321 485Q318 510 295 520Q230 532 180 530L160 525Q155 510 155 475Z" />
            <ellipse cx="199" cy="480" rx="14.500" ry="15" fill="#667eb8" />
            <path fill="#98a5b6" stroke="#97a2a5" stroke-width="3" d="M1175 480Q1175 440 1205 428Q1270 403 1385 403L1402 405L1408 412L1418 408Q1440 420 1440 480Q1438 540 1420 575Q1400 597 1360 593Q1270 585 1200 545Q1175 520 1175 480Z" />
            <path fill="#879abc" d="M1212 480Q1213 440 1230 435Q1300 420 1395 420Q1420 430 1421 480Q1420 520 1408 545Q1390 557 1350 552Q1270 545 1230 530Q1212 515 1212 480Z" />
            <path fill="#738abd" stroke="#6f90c6" stroke-width="2" d="M1257 482Q1258 448 1280 440Q1340 433 1410 434L1411 525Q1400 540 1370 537Q1300 532 1275 520Q1257 505 1257 482Z" />
            <path fill="#657db8" d="M1319 485Q1320 455 1345 449L1405 442L1407 530L1395 524Q1350 522 1330 510Q1320 500 1319 485Z" />
          </g>
          {#each legend.slice(0, -1) as [y, color], i}<rect x="1311" y={210 + y / 3} width="16" height={(legend[i + 1][0] - y) / 3 + 0.1} fill={color} shape-rendering="crispEdges" />{/each}
          {#each ticks as [y, label, x, w]}
            <path d="M1324 {y}h12" stroke="#fff" />
            <text {x} y={y + 4.500} textLength={w} class="vt">{label}</text>
          {/each}
          <text class="vt" textLength="61" transform="translate(1422.500 367) rotate(-90)">E-Field Z</text>
          <path d="M460.500 787V750" stroke="#f00" stroke-width="1.500" /><path d="M460.500 742l3 9.500h-6z" fill="#f00" />
          <path d="M460 787.500h-34" stroke="#dbe03a" /><path d="M460 787.500h10" stroke="#ddd" /><path d="M415 787.500l9.500-3v6z" fill="#e6e600" />
          <circle cx="460.500" cy="787.500" r="4.300" fill="#065a06" />
          <text class="ax" x="462.500" y="752">X</text><text class="ax" x="426" y="788">Y</text><text class="ax" x="463" y="787">Z</text>
        </svg>
      </div>
    </section>
  </div>
  <div class="status">
    <span class="btn sx"><svg width="9" height="9" viewBox="0 0 9 9"><path d="M1.500 1.500l6 6M7.500 1.500l-6 6" stroke="#8b8d8c" stroke-width="2.600" /></svg></span>
    <div class="sbox"></div>
    <div class="mem"><div class="used" style:width="52%"></div><span>{@render txt('FC16ARH8: 14.4 GiB/27.7 GiB 52.0%', 180)}</span></div>
  </div>

  <div class="mark m1"></div><div class="mark m2"></div>
  <span class="num n1">1</span><span class="num n2">2</span>
</div>

<style>
  :global(body) { background: #eef1f2; overflow: hidden; }
  .app { position: relative; width: 1430px; height: 893px; overflow: hidden; background: #eef1f2; font: 11px/14px "DejaVu Sans Condensed", "DejaVu Sans", sans-serif; font-stretch: condensed; color: #0c0c0c; display: flex; flex-direction: column; }
  .app, .app :global(*) { box-sizing: border-box; }
  .txt { display: inline-block; white-space: nowrap; flex: none; }
  .ic, .ic :global(svg), svg { display: block; flex: none; overflow: visible; }
  .title { height: 25px; background: #f3f3f3; display: flex; align-items: center; padding: 0 11px 6px 5px; font: 12px/16px "Open Sans", sans-serif; color: #858585; gap: 5px; flex: none; }
  .wc { margin-left: auto; }
  .menu { height: 18px; background: #ecf0f1; border-bottom: 1px solid #c8cbcb; display: flex; align-items: center; padding: 1px 0 0 6px; font: 12px/16px "Open Sans", sans-serif; color: #969b9e; flex: none; }
  .menu u { text-underline-offset: 2px; }
  .bar { height: 39px; border-bottom: 1px solid #b5b8b8; background: linear-gradient(#f4f4f4 74%, #ecf0f1 76%); display: flex; align-items: center; flex: none; }
  .bar.last { height: 38px; }
  .cell { display: flex; align-items: center; justify-content: center; height: 32px; flex: none; }
  .cell.on { background: #dad9d9; border: 1px solid #aaa7a8; border-radius: 3px; height: 31px; }
  .grip { width: 5px; height: 18px; flex: none; background: radial-gradient(circle at 1px 1px, #c0c3c3 .6px, transparent 1px) 0 0/3px 3px; }
  .sep { width: 1px; height: 28px; background: #d8dada; }
  .caret { width: 0; height: 0; border: 4px solid transparent; border-top: 4.500px solid #4e5050; border-bottom: 0; flex: none; }
  .caret.up { border-top: 0; border-bottom: 4.500px solid #4e5050; }
  .tlabel { width: 29px; padding-top: 1px; }
  .tcombo { width: 76px; height: 22px; border: 1px solid #a6a8aa; border-radius: 3px; background: #f4f5f5; display: flex; }
  .tin { width: 54px; margin: 1px 0 1px 1px; border: 1px solid #9b9ea0; border-radius: 2px; padding: 3px 2px; line-height: 13px; }
  .tdrop { border-left: 1px solid #c3c5c6; flex: 1; display: flex; align-items: center; justify-content: center; }
  .spin { margin-left: 2px; width: 49px; height: 22px; border: 1px solid #a6a8aa; border-radius: 3px; background: #f4f5f5; display: flex; }
  .sv { width: 34px; padding: 4px 0 0 4px; border-right: 1px solid #b9bbbc; }
  .sb { flex: 1; display: flex; flex-direction: column; align-items: center; justify-content: center; gap: 3px; }
  .tmax { width: 49px; padding: 1px 0 0 1px; }
  .combo { height: 23px; border: 1px solid #a7a9aa; border-radius: 3px; background: linear-gradient(#f5f5f5 50%, #eef2f2); display: flex; align-items: center; padding: 2px 5px 0 4px; }
  .combo .caret { margin: -2px 0 0 auto; }
  .c150 { width: 150px; margin-right: 4px; }
  .c150.nomr { margin-right: 0; }
  .c72 { width: 72px; }
  .g2 { width: 17px; padding-left: 4px; }
  .dot { width: 5px; height: 5px; border-radius: 50%; background: #e9b42d; border: 1px solid #c3973b; margin: -2px 8px 0 6px; }
  .main { display: flex; height: 714px; flex: none; }
  aside { width: 369px; display: flex; flex-direction: column; }
  .dtitle { height: 20px; display: flex; align-items: center; justify-content: space-between; padding: 1px 3px 0 0; flex: none; }
  .dtitle .txt { padding-top: 1px; }
  .dtitle.two { height: 22px; padding-top: 0; }
  .dock { display: flex; gap: 2px; margin-right: -1px; }
  .tree { height: 130px; width: 368px; border: 1px solid #b4b6b7; border-left: 0; background: #f4f4f4; flex: none; }
  .trow { display: flex; align-items: center; }
  .first { height: 25px; padding: 2px 0 0 33px; gap: 5px; }
  .first svg { align-self: flex-start; margin-top: -1px; }
  .second { height: 18px; gap: 13px; margin-top: 1px; }
  .sel { width: 180px; height: 18px; border: 1px solid #c6c9ca; background: linear-gradient(#eceeee, #e2e4e4); display: flex; align-items: center; gap: 2px; color: #f8f9f9; border-radius: 2px; }
  .sel b { padding-top: 1px; }
  .hdots { width: 17px; margin-left: 175px; border-top: 1px dotted #a9acad; margin-top: 2px; height: 3px; flex: none; }
  .tabs { display: flex; height: 25px; align-items: flex-end; flex: none; width: 368px; }
  .tab { width: 79px; height: 22px; border: 1px solid #b0b2b3; border-left: 0; background: #dbdbdb; border-radius: 0 3px 0 0; padding: 5px 0 0 10px; }
  .tab.act { width: 70px; height: 24px; background: linear-gradient(#f5f5f5, #f0f2f2); border-bottom: 0; padding: 6px 0 0 7px; }
  .fill { flex: 1; border-bottom: 1px solid #b0b2b3; }
  .btns { display: flex; gap: 2px; padding: 7px 0 0 5px; height: 35px; flex: none; }
  .btn { border: 1px solid #a9abac; border-radius: 3px; background: linear-gradient(#f5f5f5 50%, #eef1f2); display: flex; align-items: center; justify-content: center; flex: none; }
  .btns .btn { width: 87px; height: 24px; gap: 3px; }
  .btns .btn .txt { padding-top: 2px; }
  .btns .apply { background: linear-gradient(#c2e6b0 50%, #b2d9a2); border-color: #90a888; }
  .btn.off { border-color: #c8cacb; color: #8c8f90; }
  .btns .help { font: bold 16px "Liberation Sans", sans-serif; color: #82ab6c; }
  .search { display: flex; gap: 2px; padding-left: 5px; height: 30px; flex: none; margin-top: 1px; }
  .inp { width: 328px; height: 22px; border: 1px solid #a7a9aa; border-radius: 3px; background: #f4f4f4; color: #85888a; padding: 5px 0 0 1px; }
  .gear { width: 24px; height: 23px; }
  .scroll { display: flex; height: 438px; overflow: hidden; width: 359px; flex: none; }
  .content { width: 345px; padding-left: 5px; overflow: hidden; flex: none; }
  .hdr { display: flex; gap: 4px; height: 26px; margin-bottom: 6px; align-items: center; }
  .hbox { width: 212px; height: 26px; border: 1px solid #b2b4b5; display: flex; align-items: center; overflow: hidden; padding-left: 11px; flex: none; }
  .hbox b { overflow: hidden; width: 171px; display: block; padding-top: 2px; }
  .dashmark { width: 13px; height: 5px; background: #3a93c4; border: 1px solid #8aa5b3; margin-right: 7px; flex: none; }
  .sq { width: 28px; height: 24px; overflow: hidden; }
  .down { background: #dadada; }
  .arr { height: 55px; width: 340px; border: 1px solid #abadae; background: #f4f4f4; margin-bottom: 4px; }
  .arow { display: flex; align-items: center; height: 21px; padding: 0 1px 0 3px; }
  .arow .txt { padding-top: 1px; }
  .arow.head { height: 17px; border-bottom: 1px solid #b3b5b6; background: linear-gradient(#f5f5f5, #eef1f2); }
  .arow.head > svg { margin-left: auto; }
  .check { width: 14px; height: 14px; border: 1px solid #abadae; background: #f5f5f5; display: block; flex: none; margin-right: 5px; color: #000; }
  .pts { margin: 0 6px 0 1px; }
  .frow { display: flex; height: 22px; }
  .mb6 { margin-bottom: 6px; }
  .frow .combo { height: 22px; }
  .lab { padding-top: 4px; flex: none; margin-left: -1px; }
  .l1 { width: 57px; } .l2 { width: 79px; } .l3 { width: 80px; }
  .grow { flex: 1; padding-left: 3px; padding-right: 7px; }
  .dis { color: #8b8e8f; border-color: #c2c4c5; }
  .dis .caret { border-top-color: #a3a5a6; }
  .sect { height: 22px; border-bottom: 1px solid #9fa3a5; font-weight: bold; padding-top: 8px; margin-bottom: 6px; line-height: 14px; }
  .cc { gap: 4px; height: 24px; margin-bottom: 4px; }
  .frow .cc1 { width: 152px; height: 24px; padding-right: 6px; } .frow .cc2 { width: 152px; margin-top: 1px; padding-right: 6px; }
  .eb { gap: 4px; height: 24px; }
  .edit { width: 116px; height: 24px; gap: 1px; }
  .edit .txt { padding-top: 1px; }
  .slider { width: 126px; height: 5px; border: 1px solid #aaacad; border-radius: 2px; background: #eef0f0; margin: 8px 7px 0 0; position: relative; flex: none; }
  .slider i { position: absolute; left: -1px; top: -5px; width: 14px; height: 13px; border: 1px solid #a2a4a5; border-radius: 3px; background: #f4f4f4; }
  .slider i.right { left: auto; right: -1px; }
  .slider.gray { background: #dcdada; }
  .slider.part { background: linear-gradient(90deg, #2389db 20px, #dcdada 20px); }
  .slider.part i { left: 18px; }
  .inp.v { width: 128px; color: #111; padding: 4px 0 0 3px; }
  .inp.dimt { color: #888; }
  .crow { display: flex; height: 23px; align-items: center; margin-top: -1px; }
  .crow .check { margin-right: 4px; }
  .dim { color: #8a8d8e; margin: 0 0 2px; } .dim .check { color: #555; }
  .sbar { width: 14px; border-left: 1px solid #bcbebf; display: flex; flex-direction: column; background: #f4f4f4; }
  .sbtn { height: 14px; border-bottom: 1px solid #bcbebf; display: flex; align-items: center; justify-content: center; background: #eff1f2; }
  .track { height: 181px; background: #f4f4f4; }
  .thumb { flex: 1; background: #e9e8e9; border: 1px solid #bcbebf; border-left: 0; border-right: 1px solid #e2d8dc; }
  .sbtn.dn { border-bottom: 0; background: #f4f4f4; }
  .split { width: 6px; padding: 351px 0 0 2px; }
  .split i { display: block; height: 16px; border-left: 1px dotted #a9acad; }
  section { flex: 1; display: flex; flex-direction: column; border-left: 1px solid #b0b2b3; border-bottom: 1px solid #c3c5c6; margin-top: 2px; margin-left: -1px; width: 1056px; }
  .ltabs { height: 26px; display: flex; align-items: flex-end; flex: none; }
  .ltab.a { width: 109px; height: 27px; margin-bottom: -1px; border: 1px solid #b0b2b3; border-left: 0; border-bottom: 0; background: #f4f4f4; border-radius: 3px 3px 0 0; display: flex; align-items: center; padding-left: 11px; gap: 3px; }
  .ltab .txt { padding-top: 1px; }
  .ltab.b { width: 31px; height: 24px; background: #e6e6e6; border: 1px solid #b0b2b3; border-left: 0; border-radius: 0 3px 0 0; text-align: center; font-size: 13px; padding-top: 5px; }
  .lfill { flex: 1; border-bottom: 1px solid #b0b2b3; }
  .vbar { height: 27px; display: flex; align-items: center; padding-left: 1px; flex: none; }
  .vcell { width: 26px; height: 20px; padding-left: 3px; margin-top: -2px; flex: none; }
  .d2 { font: bold 10.500px/20px "Noto Sans", sans-serif; color: #6a7359; padding: 0; text-align: center; }
  .vsep { width: 6px; height: 14px; background: linear-gradient(#cdd0d0, #cdd0d0) 3px 0/1px 100% no-repeat; flex: none; }
  .rv { margin: 0 11px 0 auto; }
  .rv .txt { border-bottom: 1px solid #111; line-height: 12px; padding-top: 1px; }
  .vb { width: 25px; height: 25px; border: 1px solid #b6b8b9; border-radius: 3px; background: #f0f2f2; display: flex; align-items: center; justify-content: center; margin-right: 2px; flex: none; }
  .vb:last-child { margin-right: -4px; }
  .view { flex: none; height: 658px; border: 2px solid #0000f0; border-right: 0; margin-left: 1px; background: #f2f4f6; padding: 1px 0 0 1px; width: 1055px; overflow: hidden; }
  .vt { font: 400 16px Lato, sans-serif; fill: #f0f0f2; }
  .ax { font: 13px Lato, sans-serif; fill: #eee; }
  .status { flex: 1; display: flex; padding-left: 468px; align-items: flex-start; padding-top: 4px; }
  .sx { width: 20px; height: 20px; margin-top: 1px; padding-bottom: 2px; }
  .sbox { width: 447px; height: 20px; border: 1px solid #a5a9ab; border-bottom: 0; margin-left: 2px; border-right: 0; }
  .mem { position: relative; margin-left: 6px; width: 470px; height: 22px; border: 1px solid #a5a9ab; border-radius: 2px; background: linear-gradient(#f3f3f3, #e9eced); }
  .used { height: 100%; background: linear-gradient(#b9e0a8, #aad698); }
  .mem > span { position: absolute; left: 144px; top: 4px; }
  .mark { position: absolute; border: 4px solid #f00505; }
  .m1 { left: 557px; top: 40px; width: 31px; height: 41px; }
  .m2 { left: 695px; top: 38px; width: 216px; height: 43px; }
  .num { position: absolute; font: bold 21px/24px "Noto Sans", sans-serif; color: #f00505; }
  .n1 { left: 562px; top: 13px; } .n2 { left: 798px; top: 11px; }
</style>
